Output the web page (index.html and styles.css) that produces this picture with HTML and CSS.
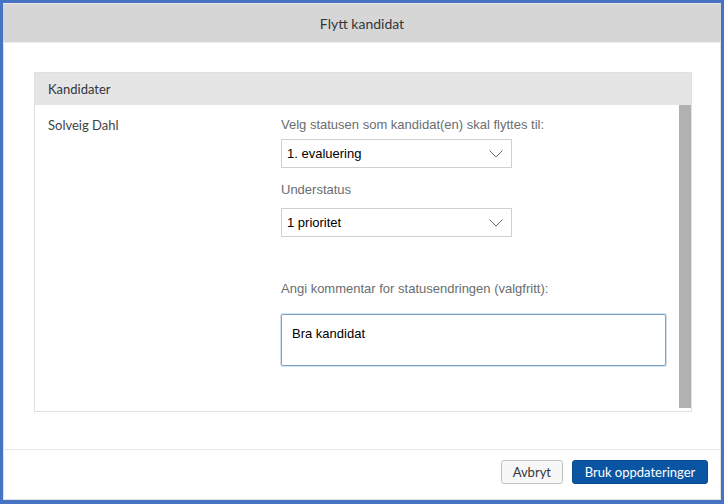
FILE: index.html
```html
<!DOCTYPE html>
<html lang="no">
<head>
    <meta charset="UTF-8">
    <title>Flytt kandidat</title>
    <link rel="stylesheet" href="styles.css">
</head>
<body>
    <div class="dialog">
        <div class="dialog-header">Flytt kandidat</div>

        <div class="dialog-content">
            <div class="panel">
                <div class="panel-header">Kandidater</div>
                <div class="panel-body">
                    <div class="candidate">Solveig Dahl</div>
                    <div class="fields">
                        <label class="field-label">Velg statusen som kandidat(en) skal flyttes til:</label>
                        <div class="select">
                            <span>1. evaluering</span>
                            <svg class="chevron" width="14" height="8" viewBox="0 0 14 8"><path d="M0.5 0.5 L7 7 L13.5 0.5" fill="none" stroke="#6a6d70" stroke-width="1"/></svg>
                        </div>

                        <label class="field-label sub">Understatus</label>
                        <div class="select">
                            <span>1 prioritet</span>
                            <svg class="chevron" width="14" height="8" viewBox="0 0 14 8"><path d="M0.5 0.5 L7 7 L13.5 0.5" fill="none" stroke="#6a6d70" stroke-width="1"/></svg>
                        </div>

                        <label class="field-label comment">Angi kommentar for statusendringen (valgfritt):</label>
                        <textarea class="comment-box">Bra kandidat</textarea>
                    </div>
                    <div class="scrollbar"></div>
                </div>
            </div>
        </div>

        <div class="dialog-footer">
            <button class="btn">Avbryt</button>
            <button class="btn btn-primary">Bruk oppdateringer</button>
        </div>
    </div>
</body>
</html>
```

FILE: styles.css
```css
* {
    box-sizing: border-box;
}
body {
    margin: 0;
    background: #fff;
    font-family: Lato, "Open Sans", sans-serif;
    color: #32363a;
}
.dialog {
    width: 724px;
    height: 504px;
    display: flex;
    flex-direction: column;
    border: 3px solid #4673c3;
    border-bottom-width: 4px;
    box-shadow: inset 0 0 0 1px #e2e2e2;
    background: #fff;
}
.dialog-header {
    height: 40px;
    background: #d6d6d6;
    border-top: 1px solid #e6e6e6;
    border-bottom: 1px solid #ececec;
    display: flex;
    align-items: center;
    justify-content: center;
    font-size: 14px;
    color: #32363a;
}
.dialog-content {
    padding: 29px 29px 0 31px;
}
.panel {
    border: 1px solid #e0e0e0;
}
.panel-header {
    height: 32px;
    background: #e5e5e5;
    padding-left: 13px;
    display: flex;
    align-items: center;
    font-size: 13px;
}
.panel-body {
    height: 306px;
    display: flex;
    padding-left: 13px;
}
.candidate {
    width: 233px;
    padding-top: 12px;
    font-size: 13px;
    line-height: 16px;
    color: #3f4246;
}
.fields {
    width: 385px;
    padding-top: 12px;
    display: flex;
    flex-direction: column;
    font-family: "Liberation Sans", Arial, sans-serif;
}
.field-label {
    font-size: 13px;
    line-height: 16px;
    color: #6a6d70;
}
.field-label.sub {
    margin-top: 14px;
}
.field-label.comment {
    margin-top: 44px;
}
.select {
    width: 231px;
    height: 29px;
    margin-top: 6px;
    border: 1px solid #cfcfcf;
    background: #fff;
    display: flex;
    align-items: center;
    justify-content: space-between;
    padding: 0 8px 0 5px;
    font-size: 13px;
    color: #000;
}
.field-label.sub + .select {
    margin-top: 10px;
}
.comment-box {
    width: 385px;
    height: 52px;
    margin-top: 17px;
    border: 1px solid #7ba3c6;
    border-radius: 2px;
    box-shadow: 0 0 0 1px #d3e1ed;
    padding: 11px 10px 9px;
    font-family: "Liberation Sans", Arial, sans-serif;
    font-size: 13px;
    color: #000;
    resize: none;
    outline: none;
}
.scrollbar {
    width: 12px;
    height: 303px;
    margin-left: auto;
    background: #b1b1b1;
}
.dialog-footer {
    margin-top: auto;
    height: 51px;
    border-top: 1px solid #e8e8e8;
    display: flex;
    justify-content: flex-end;
    align-items: flex-start;
    gap: 9px;
    padding: 10px 13px 0 0;
}
.btn {
    height: 24px;
    padding: 0 11px;
    font-family: Lato, "Open Sans", sans-serif;
    font-size: 13px;
    color: #32363a;
    background: #f7f7f7;
    border: 1px solid #c2c2c2;
    border-radius: 3px;
    cursor: pointer;
}
.btn-primary {
    width: 136px;
    padding: 0;
    background: #0a55a3;
    border-color: #094a8c;
    color: #fff;
}
```
